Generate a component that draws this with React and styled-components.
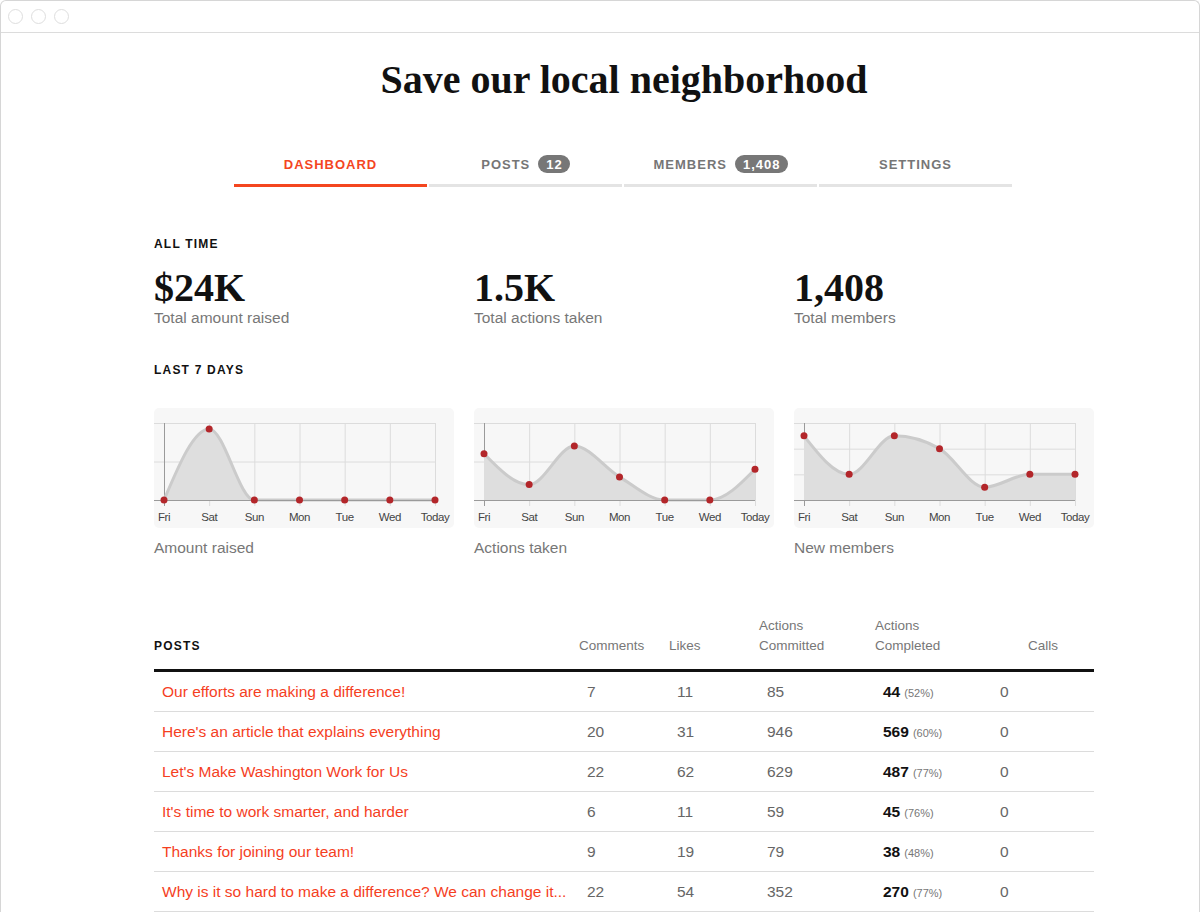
import React from "react";
import styled, { createGlobalStyle } from "styled-components";

const GlobalStyle = createGlobalStyle`
  html, body {
    margin: 0;
    padding: 0;
    background: #fff;
  }
  body {
    font-family: "Liberation Sans", Arial, sans-serif;
    overflow: hidden;
  }
`;

const ACCENT = "#f4461f";
const LINK = "#f53f1f";

const Window = styled.div`
  box-sizing: border-box;
  width: 1200px;
  height: 912px;
  border: 1px solid #d6d6d6;
  border-bottom: none;
  border-radius: 6px 6px 0 0;
  overflow: hidden;
`;

const TitleBar = styled.div`
  height: 31px;
  border-bottom: 1px solid #dcdcdc;
  display: flex;
  align-items: center;
  gap: 8px;
  padding-left: 7px;
`;

const Dot = styled.span`
  width: 13px;
  height: 13px;
  border: 1px solid #dedede;
  border-radius: 50%;
`;

const Content = styled.div`
  width: 940px;
  padding-left: 153px;
`;

const Title = styled.h1`
  margin: 23px 0 0;
  text-align: center;
  font-family: "Liberation Serif", "Times New Roman", serif;
  font-weight: 700;
  font-size: 40px;
  line-height: 48px;
  color: #111;
`;

const Tabs = styled.nav`
  display: flex;
  justify-content: center;
  gap: 2px;
  margin: 52px 0 0 -2px;
`;

const Tab = styled.div`
  width: 193px;
  display: flex;
  justify-content: center;
  align-items: center;
  gap: 8px;
  height: 16px;
  padding-bottom: 12px;
  border-bottom: 3px solid ${(p) => (p.$active ? ACCENT : "#e4e4e4")};
  color: ${(p) => (p.$active ? ACCENT : "#767676")};
  font-size: 13px;
  font-weight: 700;
  letter-spacing: 1px;
  text-transform: uppercase;
`;

const Badge = styled.span`
  display: inline-flex;
  align-items: center;
  height: 18px;
  padding: 0 7px 0 8px;
  border-radius: 9px;
  background: #777;
  color: #fff;
  font-size: 13px;
  font-weight: 700;
  letter-spacing: 1px;
`;

const SectionLabel = styled.h3`
  margin: ${(p) => p.$top}px 0 0;
  font-size: 12px;
  line-height: 16px;
  font-weight: 700;
  letter-spacing: 1.2px;
  color: #111;
  text-transform: uppercase;
`;

const StatsGrid = styled.div`
  display: grid;
  grid-template-columns: repeat(3, 320px);
  margin-top: 16px;
`;

const StatValue = styled.div`
  font-family: "Liberation Serif", "Times New Roman", serif;
  font-weight: 700;
  font-size: 40px;
  line-height: 40px;
  color: #111;
`;

const StatLabel = styled.div`
  margin-top: 1px;
  font-size: 15.5px;
  line-height: 18px;
  color: #777;
`;

const ChartsGrid = styled.div`
  display: grid;
  grid-template-columns: repeat(3, 300px);
  column-gap: 20px;
  margin-top: 30px;
`;

const ChartCard = styled.div`
  height: 120px;
  background: #f7f7f7;
  border-radius: 5px;
  svg {
    display: block;
  }
`;

const ChartCaption = styled.div`
  margin-top: 11px;
  font-size: 15.5px;
  line-height: 18px;
  color: #777;
`;

const Table = styled.div`
  margin-top: 59px;
`;

const COLS = "425px 90px 90px 116px 117px 102px";

const HeadRow = styled.div`
  display: grid;
  grid-template-columns: ${COLS};
  align-items: end;
  padding-bottom: 13px;
  border-bottom: 3px solid #111;
`;

const HeadCell = styled.div`
  font-size: 13.5px;
  line-height: 20px;
  color: #777;
  text-align: ${(p) => (p.$center ? "center" : "left")};
`;

const HeadTitle = styled.div`
  font-size: 12px;
  line-height: 20px;
  font-weight: 700;
  letter-spacing: 1.2px;
  color: #111;
`;

const Row = styled.div`
  display: grid;
  grid-template-columns: ${COLS};
  align-items: center;
  height: 39px;
  border-bottom: 1px solid #dcdcdc;
`;

const PostLink = styled.a`
  padding: 0 8px;
  font-size: 15.5px;
  color: ${LINK};
  white-space: nowrap;
  overflow: hidden;
  text-overflow: ellipsis;
  text-decoration: none;
`;

const Cell = styled.div`
  padding-left: 8px;
  font-size: 15.5px;
  color: #666;
`;

const Strong = styled.b`
  color: #111;
  font-weight: 700;
`;

const Pct = styled.span`
  margin-left: 4px;
  font-size: 11px;
  color: #777;
`;

const DAYS = ["Fri", "Sat", "Sun", "Mon", "Tue", "Wed", "Today"];

// monotone cubic, same idea as d3.curveMonotoneX
function monotonePath(pts) {
  const n = pts.length;
  const sign = (v) => (v < 0 ? -1 : 1);
  const t = new Array(n).fill(0);
  for (let i = 1; i < n - 1; i++) {
    const [x0, y0] = pts[i - 1];
    const [x1, y1] = pts[i];
    const [x2, y2] = pts[i + 1];
    const h0 = x1 - x0;
    const h1 = x2 - x1;
    const s0 = (y1 - y0) / h0;
    const s1 = (y2 - y1) / h1;
    const p = (s0 * h1 + s1 * h0) / (h0 + h1);
    t[i] = (sign(s0) + sign(s1)) * Math.min(Math.abs(s0), Math.abs(s1), 0.5 * Math.abs(p)) || 0;
  }
  const s = (a, b) => (b[1] - a[1]) / (b[0] - a[0]);
  t[0] = (3 * s(pts[0], pts[1]) - t[1]) / 2;
  t[n - 1] = (3 * s(pts[n - 2], pts[n - 1]) - t[n - 2]) / 2;
  let d = `M${pts[0][0]},${pts[0][1]}`;
  for (let i = 0; i < n - 1; i++) {
    const [x0, y0] = pts[i];
    const [x1, y1] = pts[i + 1];
    const dx = (x1 - x0) / 3;
    d += ` C${x0 + dx},${y0 + dx * t[i]} ${x1 - dx},${y1 - dx * t[i + 1]} ${x1},${y1}`;
  }
  return d;
}

const Chart = ({ data, max, lines }) => {
  const left = 10;
  const right = 281;
  const top = 15;
  const bottom = 92;
  const step = (right - left) / (data.length - 1);
  const pts = data.map((v, i) => [left + i * step, bottom - (v / max) * (bottom - top)]);
  const curve = monotonePath(pts);
  const area = `${curve} L${right},${bottom} L${left},${bottom} Z`;

  return (
    <svg width="300" height="120" viewBox="0 0 300 120">
      {Array.from({ length: lines }).map((_, i) => {
        const y = top + (i * (bottom - top)) / lines;
        return <line key={i} x1="0" x2={right} y1={y + 0.5} y2={y + 0.5} stroke="#dcdcdc" />;
      })}
      {pts.map(([x], i) => (
        <line
          key={i}
          x1={x + 0.5}
          x2={x + 0.5}
          y1={top}
          y2={bottom + 6}
          stroke={i === 0 ? "#9a9a9a" : "#dcdcdc"}
        />
      ))}
      <path d={area} fill="#dedede" />
      <path d={curve} fill="none" stroke="#cbcbcb" strokeWidth="3" />
      <line x1="0" x2={right} y1={bottom + 0.5} y2={bottom + 0.5} stroke="#9a9a9a" />
      {pts.map(([x, y], i) => (
        <circle key={i} cx={x} cy={y} r="3.5" fill="#b3262a" />
      ))}
      {DAYS.map((d, i) => (
        <text
          key={d}
          x={left + i * step}
          y="113"
          textAnchor="middle"
          fontFamily="'Liberation Sans', Arial, sans-serif"
          fontSize="11.5"
          fill="#444"
          letterSpacing="-0.4"
        >
          {d}
        </text>
      ))}
    </svg>
  );
};

const stats = [
  { value: "$24K", label: "Total amount raised" },
  { value: "1.5K", label: "Total actions taken" },
  { value: "1,408", label: "Total members" },
];

const charts = [
  { caption: "Amount raised", data: [0, 24, 0, 0, 0, 0, 0], max: 26, lines: 2 },
  { caption: "Actions taken", data: [6, 2, 7, 3, 0, 0, 4], max: 10, lines: 2 },
  { caption: "New members", data: [5, 2, 5, 4, 1, 2, 2], max: 6, lines: 3 },
];

const posts = [
  { title: "Our efforts are making a difference!", comments: 7, likes: 11, committed: 85, completed: 44, pct: 52, calls: 0 },
  { title: "Here's an article that explains everything", comments: 20, likes: 31, committed: 946, completed: 569, pct: 60, calls: 0 },
  { title: "Let's Make Washington Work for Us", comments: 22, likes: 62, committed: 629, completed: 487, pct: 77, calls: 0 },
  { title: "It's time to work smarter, and harder", comments: 6, likes: 11, committed: 59, completed: 45, pct: 76, calls: 0 },
  { title: "Thanks for joining our team!", comments: 9, likes: 19, committed: 79, completed: 38, pct: 48, calls: 0 },
  { title: "Why is it so hard to make a difference? We can change it...", comments: 22, likes: 54, committed: 352, completed: 270, pct: 77, calls: 0 },
];

const App = () => (
  <>
    <GlobalStyle />
    <Window>
      <TitleBar>
        <Dot />
        <Dot />
        <Dot />
      </TitleBar>
      <Content>
        <Title>Save our local neighborhood</Title>

        <Tabs>
          <Tab $active>Dashboard</Tab>
          <Tab>
            Posts <Badge>12</Badge>
          </Tab>
          <Tab>
            Members <Badge>1,408</Badge>
          </Tab>
          <Tab>Settings</Tab>
        </Tabs>

        <SectionLabel $top={49}>All time</SectionLabel>
        <StatsGrid>
          {stats.map((s) => (
            <div key={s.label}>
              <StatValue>{s.value}</StatValue>
              <StatLabel>{s.label}</StatLabel>
            </div>
          ))}
        </StatsGrid>

        <SectionLabel $top={35}>Last 7 days</SectionLabel>
        <ChartsGrid>
          {charts.map((c) => (
            <div key={c.caption}>
              <ChartCard>
                <Chart data={c.data} max={c.max} lines={c.lines} />
              </ChartCard>
              <ChartCaption>{c.caption}</ChartCaption>
            </div>
          ))}
        </ChartsGrid>

        <Table>
          <HeadRow>
            <HeadTitle>POSTS</HeadTitle>
            <HeadCell>Comments</HeadCell>
            <HeadCell>Likes</HeadCell>
            <HeadCell>
              Actions
              <br />
              Committed
            </HeadCell>
            <HeadCell>
              Actions
              <br />
              Completed
            </HeadCell>
            <HeadCell $center>Calls</HeadCell>
          </HeadRow>
          {posts.map((p) => (
            <Row key={p.title}>
              <PostLink href="#">{p.title}</PostLink>
              <Cell>{p.comments}</Cell>
              <Cell>{p.likes}</Cell>
              <Cell>{p.committed}</Cell>
              <Cell>
                <Strong>{p.completed}</Strong>
                <Pct>({p.pct}%)</Pct>
              </Cell>
              <Cell>{p.calls}</Cell>
            </Row>
          ))}
        </Table>
      </Content>
    </Window>
  </>
);

export default App;
